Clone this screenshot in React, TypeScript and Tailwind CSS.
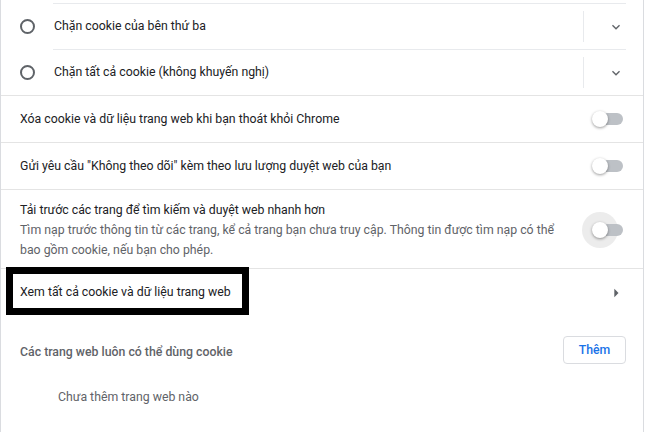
import React from "react";

const font = { fontFamily: "Roboto, 'Noto Sans', sans-serif" };

const Chevron = () => (
  <svg width="16" height="16" viewBox="0 0 24 24" className="fill-[#5f6368]">
    <path d="M16.59 8.59L12 13.17 7.41 8.59 6 10l6 6 6-6z" />
  </svg>
);

const ArrowRight = () => (
  <svg width="20" height="20" viewBox="0 0 24 24" className="fill-[#5f6368]">
    <path d="M10 17l5-5-5-5v10z" />
  </svg>
);

const Toggle = ({ halo = false }: { halo?: boolean }) => (
  <div className="relative w-[31px] h-[16px]">
    {halo && (
      <div className="absolute left-[-10px] top-[-10px] w-[36px] h-[36px] rounded-full bg-[#ececec]" />
    )}
    <div className="absolute right-0 top-[2px] w-[26px] h-[12px] rounded-full bg-[#bdc1c6]" />
    <div className="absolute left-0 top-0 w-[16px] h-[16px] rounded-full bg-white shadow-[0_1px_3px_rgba(0,0,0,0.4)]" />
  </div>
);

const RadioRow = ({ label }: { label: string }) => (
  <div className="flex h-[46px]">
    <div className="w-[52px] flex items-center pl-[19px]">
      <div className="w-[15px] h-[15px] rounded-full border-2 border-[#5f6368]" />
    </div>
    <div className="flex-1 mr-[17px] border-t border-[#e8eaed] flex items-center">
      <span className="flex-1 pl-[1px] text-[12.3px] text-[#202124]">{label}</span>
      <div className="w-px h-[31px] bg-[#e8eaed]" />
      <div className="w-[42px] flex justify-end pr-[2px]">
        <Chevron />
      </div>
    </div>
  </div>
);

const ToggleRow = ({ label }: { label: string }) => (
  <div className="flex items-center justify-between h-[47px] border-t border-[#e4e4e4] pl-[19px] pr-[20px]">
    <span className="text-[12.3px] text-[#202124]">{label}</span>
    <Toggle />
  </div>
);

export default function App() {
  return (
    <div className="w-[645px] h-[432px] bg-white overflow-hidden" style={font}>
      <div className="w-[644px] h-full border-x border-[#dadce0]">
        <div className="h-[3px]" />
        <RadioRow label="Chặn cookie của bên thứ ba" />
        <RadioRow label="Chặn tất cả cookie (không khuyến nghị)" />
        <ToggleRow label="Xóa cookie và dữ liệu trang web khi bạn thoát khỏi Chrome" />
        <ToggleRow label={'Gửi yêu cầu "Không theo dõi" kèm theo lưu lượng duyệt web của bạn'} />

        <div className="flex items-center justify-between border-t border-[#e4e4e4] pl-[19px] pr-[20px] pt-[10px] pb-[8px]">
          <div className="w-[545px] text-[12.3px] leading-[20px]">
            <div className="text-[#202124]">Tải trước các trang để tìm kiếm và duyệt web nhanh hơn</div>
            <div className="text-[#5f6368]">
              Tìm nạp trước thông tin từ các trang, kể cả trang bạn chưa truy cập. Thông tin được tìm nạp có thể bao
              gồm cookie, nếu bạn cho phép.
            </div>
          </div>
          <Toggle halo />
        </div>

        <div className="relative flex items-center justify-between h-[48px] border-t border-[#e4e4e4] pl-[19px] pr-[17px]">
          <span className="text-[12.3px] text-[#202124]">Xem tất cả cookie và dữ liệu trang web</span>
          <ArrowRight />
          <div className="absolute left-[5px] top-[-2px] w-[243px] h-[48px] border-[7px] border-black" />
        </div>

        <div className="flex items-center justify-between pl-[19px] pr-[17px] pt-[20px]">
          <span className="mt-[5px] text-[12.3px] font-medium text-[#5f6368]">Các trang web luôn có thể dùng cookie</span>
          <button className="h-[28px] w-[63px] rounded-[4px] border border-[#dadce0] bg-white text-[12.3px] font-medium text-[#1a73e8]">
            Thêm
          </button>
        </div>

        <div className="pl-[57px] mt-[23px] text-[12.3px] leading-[20px] text-[#5f6368]">Chưa thêm trang web nào</div>
      </div>
    </div>
  );
}
